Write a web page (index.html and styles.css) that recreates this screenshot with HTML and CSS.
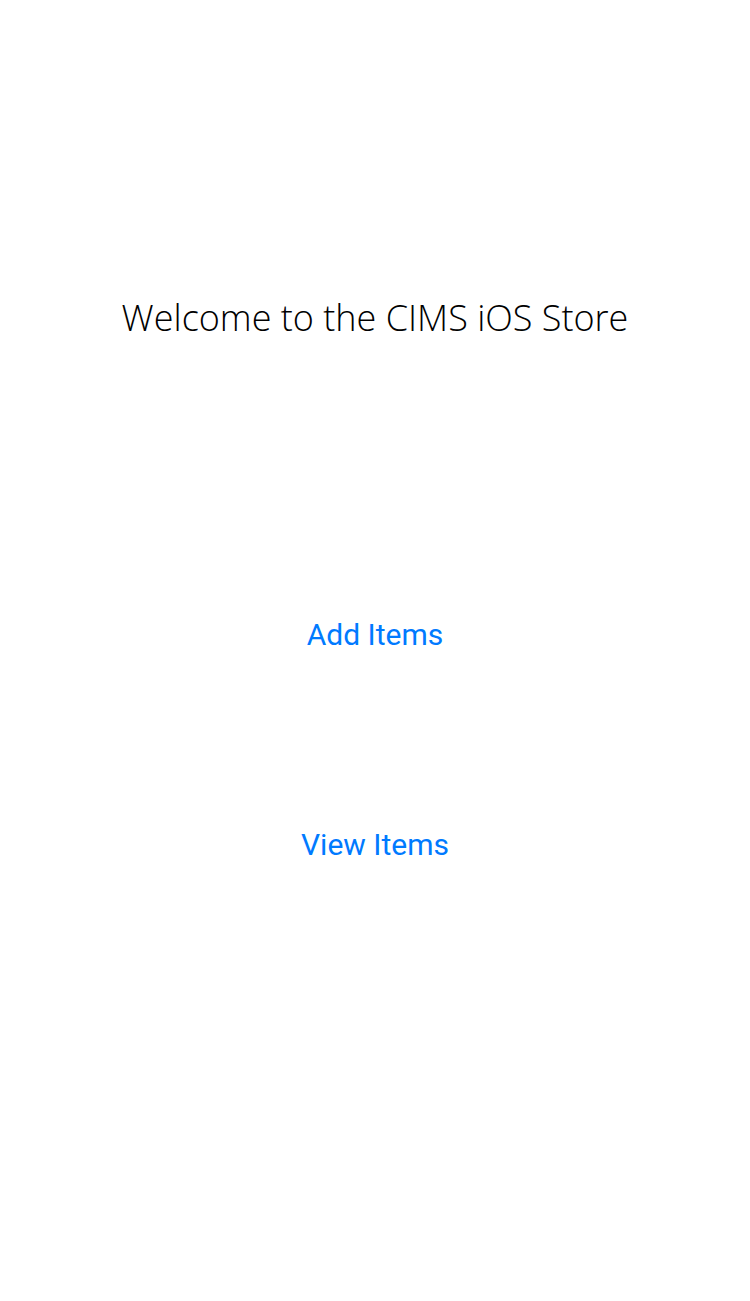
FILE: index.html
```html
<!DOCTYPE html>
<html>
<head>
<meta charset="utf-8">
<link rel="stylesheet" href="styles.css">
</head>
<body>
<main class="screen">
  <h1 class="title">Welcome to the CIMS iOS Store</h1>
  <button class="link add">Add Items</button>
  <button class="link view">View Items</button>
</main>
</body>
</html>
```
FILE: styles.css
```css
html, body {
  margin: 0;
  padding: 0;
  background: #ffffff;
}
.screen {
  width: 750px;
  height: 1301px;
  display: flex;
  flex-direction: column;
  align-items: center;
}
.title {
  margin: 294px 0 0 0;
  font-family: "Open Sans", sans-serif;
  font-weight: 300;
  font-size: 36px;
  line-height: 48px;
  color: #000000;
  letter-spacing: 0;
}
.link {
  background: none;
  border: none;
  padding: 0;
  font-family: Roboto, "Liberation Sans", sans-serif;
  font-weight: 400;
  font-size: 30px;
  line-height: 40px;
  color: #007aff;
}
.add {
  margin-top: 273px;
}
.view {
  margin-top: 170px;
}
```
